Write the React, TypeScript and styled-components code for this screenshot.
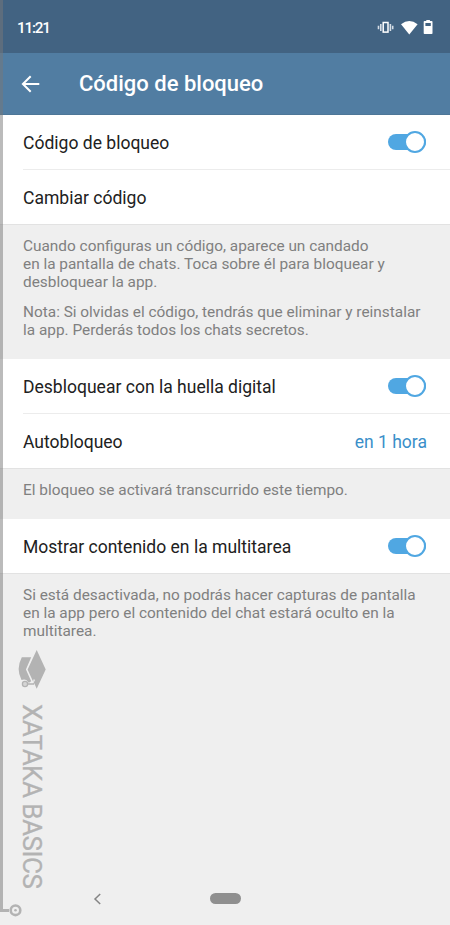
import React from 'react';
import styled, { createGlobalStyle } from 'styled-components';

const GlobalStyle = createGlobalStyle`
  *, *::before, *::after { box-sizing: border-box; }
  body { margin: 0; background: #efefef; }
`;

const Screen = styled.div`
  position: relative;
  display: flex;
  flex-direction: column;
  width: 450px;
  height: 925px;
  overflow: hidden;
  background: #efefef;
  color: #212121;
  font-family: Roboto, sans-serif;
`;

const StatusBar = styled.header`
  display: flex;
  align-items: center;
  justify-content: space-between;
  flex: none;
  height: 53px;
  padding: 2px 16px 0 17px;
  background: #426382;
  color: #fff;
`;

const Clock = styled.time`
  font-size: 15.3px;
  font-weight: 500;
  line-height: 18px;
  letter-spacing: -1.2px;
`;

const StatusIcons = styled.div`
  display: flex;
  align-items: center;
`;

const TitleBar = styled.div`
  display: flex;
  align-items: center;
  flex: none;
  height: 62px;
  padding-left: 21px;
  gap: 39px;
  background: #517da2;
  color: #fff;
  border-bottom: 1px solid #4d7697;
`;

const Title = styled.h1`
  margin: 0;
  padding-top: 1px;
  font-size: 22px;
  font-weight: 500;
  line-height: 28px;
`;

const BackButton = styled.button`
  display: flex;
  padding: 0;
  border: 0;
  background: none;
  color: inherit;
`;

const Group = styled.section`
  flex: none;
  background: #fff;
  padding-left: 23px;
  border-bottom: 1px solid #e2e2e2;
`;

const Row = styled.div<{ $divided?: boolean }>`
  display: flex;
  align-items: center;
  justify-content: space-between;
  height: ${({ $divided }) => ($divided ? 55 : 54)}px;
  padding: 2px 23px 0 0;
  border-bottom: ${({ $divided }) => ($divided ? '1px solid #ececec' : '0')};
  font-size: 17.55px;
  line-height: 22px;
`;

const Value = styled.span`
  color: #3a8fc9;
`;

const Note = styled.div<{ $height: number }>`
  flex: none;
  height: ${({ $height }) => $height}px;
  padding: 13px 0 0 23px;
  color: #808080;
  font-size: 15.38px;
  line-height: 17.8px;
  white-space: nowrap;
`;

const Paragraph = styled.p`
  margin: 0 0 12.5px;
`;

const Track = styled.button`
  display: flex;
  align-items: center;
  justify-content: flex-end;
  width: 38px;
  height: 16px;
  margin: -2px 1px 0 0;
  padding: 0;
  border: 0;
  border-radius: 8px;
  background: #50a7e2;
`;

const Thumb = styled.span`
  width: 22px;
  height: 22px;
  flex: none;
  border: 2px solid #50a7e2;
  border-radius: 50%;
  background: #fff;
`;

const NavBar = styled.nav`
  display: flex;
  align-items: center;
  flex: none;
  height: 53px;
  margin-top: auto;
  padding-left: 93px;
`;

const HomePill = styled.span`
  width: 31px;
  height: 11px;
  margin-left: 108px;
  border-radius: 6px;
  background: #8f8f8f;
`;

const Watermark = styled.div`
  position: absolute;
  left: 0;
  top: 0;
  width: 50px;
  height: 925px;
  pointer-events: none;
`;

const MarkLines = styled.svg`
  position: absolute;
  left: 0;
  top: 0;
`;

const MarkText = styled.span`
  position: absolute;
  left: 17px;
  top: 704px;
  writing-mode: vertical-rl;
  color: #b3b3b3;
  font-size: 26px;
  line-height: 30px;
  letter-spacing: -0.5px;
  -webkit-text-stroke: 0.3px #b3b3b3;
  white-space: nowrap;
`;

const Toggle = ({ label }: { label: string }) => (
  <Track role="switch" aria-checked="true" aria-label={label}>
    <Thumb />
  </Track>
);

export default function App() {
  return (
    <Screen>
      <GlobalStyle />
      <StatusBar>
        <Clock>11:21</Clock>
        <StatusIcons>
          <svg width="57" height="18" viewBox="0 0 57 18" fill="#fff">
            <rect x="6.2" y="3.5" width="4.8" height="9.6" fill="none" stroke="#fff" strokeWidth="1.5" />
            <path d="M3.8 5v7M13.4 5v7M1.5 6.8v3.4M15.7 6.8v3.4" stroke="#d5dee7" strokeWidth="1.6" />
            <path d="M24 5.2Q32.3-1 40.6 5.2L32.3 15.4Z" />
            <path fillRule="evenodd" d="M49.3 1.9V1.1h3.6v.8h1.8q.8 0 .8.8v11.6q0 .8-.8.8h-7.2q-.8 0-.8-.8V2.7q0-.8.8-.8ZM48.4 4v3h5.4V4Z" />
          </svg>
        </StatusIcons>
      </StatusBar>
      <TitleBar>
        <BackButton aria-label="Atrás">
          <svg width="19" height="18" viewBox="0 0 19 18" fill="none" stroke="#fff" strokeWidth="2">
            <path d="M18.3 9H2M9.7 1.2L1.9 9l7.8 7.8" />
          </svg>
        </BackButton>
        <Title>Código de bloqueo</Title>
      </TitleBar>
      <Group>
        <Row $divided>
          Código de bloqueo
          <Toggle label="Código de bloqueo" />
        </Row>
        <Row>Cambiar código</Row>
      </Group>
      <Note $height={134}>
        <Paragraph>
          Cuando configuras un código, aparece un candado
          <br />
          en la pantalla de chats. Toca sobre él para bloquear y
          <br />
          desbloquear la app.
        </Paragraph>
        <Paragraph>
          Nota: Si olvidas el código, tendrás que eliminar y reinstalar
          <br />
          la app. Perderás todos los chats secretos.
        </Paragraph>
      </Note>
      <Group>
        <Row $divided>
          Desbloquear con la huella digital
          <Toggle label="Desbloquear con la huella digital" />
        </Row>
        <Row>
          Autobloqueo
          <Value>en 1 hora</Value>
        </Row>
      </Group>
      <Note $height={50}>
        <Paragraph>El bloqueo se activará transcurrido este tiempo.</Paragraph>
      </Note>
      <Group>
        <Row>
          Mostrar contenido en la multitarea
          <Toggle label="Mostrar contenido en la multitarea" />
        </Row>
      </Group>
      <Note $height={80}>
        <Paragraph>
          Si está desactivada, no podrás hacer capturas de pantalla
          <br />
          en la app pero el contenido del chat estará oculto en la
          <br />
          multitarea.
        </Paragraph>
      </Note>
      <NavBar>
        <svg width="9" height="12" viewBox="0 0 9 12" fill="none" stroke="#858585" strokeWidth="1.5">
          <path d="M7.2 1L2 6l5.2 5" />
        </svg>
        <HomePill />
      </NavBar>
      <Watermark>
        <MarkLines width="50" height="925" viewBox="0 0 50 925">
          <path d="M0 0H3V909H9V912H0Z" fill="#777" fillOpacity=".5" />
          <circle cx="15.5" cy="910.3" r="4.8" fill="#efefef" stroke="#b3b3b3" strokeWidth="2.6" />
          <circle cx="15.5" cy="910.3" r="1.3" fill="#b3b3b3" />
          <path d="M36.7 650L45.7 669.5 36.7 688.7 34.8 684.5V679.5H33.3V682L27.6 669.5Z" fill="#b3b3b3" />
          <path d="M21.8 657.3H31.2L25.9 669.5 31.2 681.2 29.3 682.6H28.3Q27 679.4 24 679.4L21.5 680Q15.7 669 21.8 657.3Z" fill="#b3b3b3" />
          <path d="M28 684H33.6L35.3 681.2" fill="none" stroke="#b3b3b3" strokeWidth="1.3" />
          <circle cx="25" cy="684" r="2.6" fill="#d5d5d5" stroke="#b3b3b3" strokeWidth="1.3" />
        </MarkLines>
        <MarkText>XATAKA BASICS</MarkText>
      </Watermark>
    </Screen>
  );
}
